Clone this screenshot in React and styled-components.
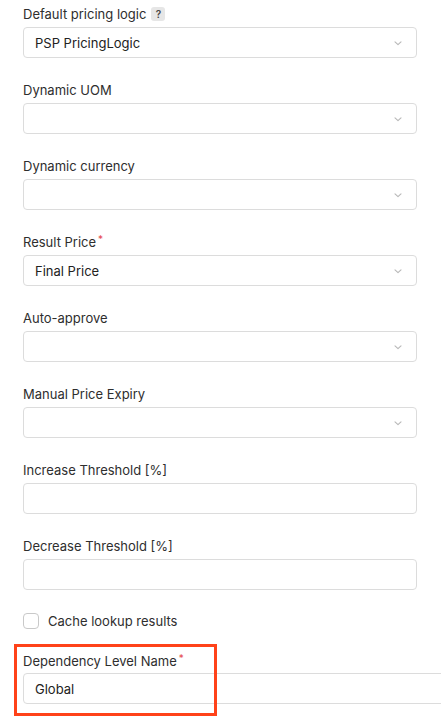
import React from 'react'
import styled, { createGlobalStyle } from 'styled-components'

const Global = createGlobalStyle`
  html, body {
    margin:0;
    padding:0;
    background:#fff;
    overflow:hidden;
  }
  body {
    font-family:Inter, "Liberation Sans", sans-serif;
    color:#2b2b2b;
    -webkit-font-smoothing:antialiased;
  }
`

const Form = styled.div`
  display:flex;
  flex-direction:column;
  padding:6px 0 0 23px;
  width:394px;
`

const Field = styled.div`
  position:relative;
  display:flex;
  flex-direction:column;
  gap:${p => p.tight ? '4px' : '5px'};
  margin-bottom:24px;
`

const Label = styled.div`
  display:flex;
  align-items:center;
  height:16px;
  font-size:13px;
  line-height:16px;
  color:#2e2e2e;
`

const Required = styled.span`
  color:#e5484d;
  font-size:10px;
  align-self:flex-start;
  margin-left:2px;
  margin-top:-3px;
`

const Help = styled.span`
  display:inline-flex;
  align-items:center;
  justify-content:center;
  width:14px;
  height:14px;
  margin-left:5px;
  border-radius:3px;
  background:#e6e6e6;
  color:#444;
  font-size:10px;
  font-weight:600;
`

const Box = styled.div`
  box-sizing:border-box;
  display:flex;
  align-items:center;
  justify-content:space-between;
  height:31px;
  width:${p => p.wide ? '440px' : '394px'};
  padding:0 11px 0 11px;
  border:1px solid #dcdcdc;
  border-radius:4px;
  background:#fff;
  font-size:13px;
  color:#222;
`

const Chevron = styled.svg`
  width:10px;
  height:10px;
  margin-right:2px;
`

const CheckRow = styled.label`
  display:flex;
  align-items:center;
  gap:9px;
  height:16px;
  margin:-1px 0 24px;
  font-size:13px;
  color:#2e2e2e;
`

const Checkbox = styled.span`
  box-sizing:border-box;
  width:16px;
  height:16px;
  border:1px solid #c9c9c9;
  border-radius:4px;
  background:#fff;
`

const Highlight = styled.div`
  position:absolute;
  left:-9px;
  top:-9px;
  width:203px;
  height:72px;
  border:3px solid #ff4219;
  box-sizing:border-box;
  pointer-events:none;
`

const Select = ({ value }) => (
  <Box>
    <span>{value}</span>
    <Chevron viewBox="0 0 10 10" fill="none">
      <path d="M2 3.8 L5 6.6 L8 3.8" stroke="#b8b8b8" strokeWidth="1.1" strokeLinecap="round" strokeLinejoin="round" />
    </Chevron>
  </Box>
)

const fields = [
  { label: 'Default pricing logic', help: true, select: true, value: 'PSP PricingLogic' },
  { label: 'Dynamic UOM', select: true },
  { label: 'Dynamic currency', select: true },
  { label: 'Result Price', required: true, select: true, value: 'Final Price' },
  { label: 'Auto-approve', select: true },
  { label: 'Manual Price Expiry', select: true },
  { label: 'Increase Threshold [%]' },
  { label: 'Decrease Threshold [%]' }
]

export default () => (
  <>
    <Global />
    <Form>
      {fields.map(f => (
        <Field key={f.label}>
          <Label>
            {f.label}
            {f.required && <Required>*</Required>}
            {f.help && <Help>?</Help>}
          </Label>
          {f.select ? <Select value={f.value} /> : <Box />}
        </Field>
      ))}
      <CheckRow>
        <Checkbox />
        Cache lookup results
      </CheckRow>
      <Field tight>
        <Highlight />
        <Label>
          Dependency Level Name
          <Required>*</Required>
        </Label>
        <Box wide>Global</Box>
      </Field>
    </Form>
  </>
)
